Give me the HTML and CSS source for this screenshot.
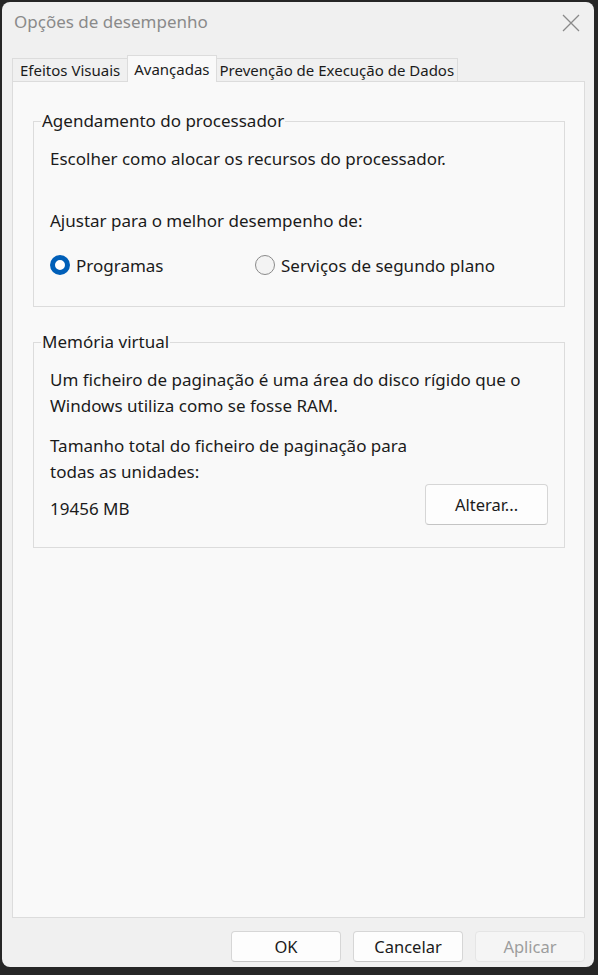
FILE: index.html
```html
<!DOCTYPE html>
<html lang="pt">
<head>
  <meta charset="UTF-8">
  <title>Opções de desempenho</title>
  <link rel="stylesheet" href="styles.css">
</head>
<body>
  <div class="window">
    <div class="titlebar">
      <span class="title">Opções de desempenho</span>
      <svg class="close" width="18" height="18" viewBox="0 0 18 18">
        <path d="M1 1L17 17M17 1L1 17" stroke="#8a8a8a" stroke-width="1.3" fill="none"/>
      </svg>
    </div>

    <div class="tabs">
      <div class="tab">Efeitos Visuais</div>
      <div class="tab active">Avançadas</div>
      <div class="tab long">Prevenção de Execução de Dados</div>
    </div>

    <div class="panel">
      <fieldset class="group">
        <legend>Agendamento do processador</legend>
        <div class="group-body cpu">
          <p class="line">Escolher como alocar os recursos do processador.</p>
          <p class="line spaced">Ajustar para o melhor desempenho de:</p>
          <div class="radios">
            <label class="radio checked"><span class="dot"></span>Programas</label>
            <label class="radio"><span class="dot"></span>Serviços de segundo plano</label>
          </div>
        </div>
      </fieldset>

      <fieldset class="group">
        <legend>Memória virtual</legend>
        <div class="group-body mem">
          <p class="line">Um ficheiro de paginação é uma área do disco rígido que o<br>Windows utiliza como se fosse RAM.</p>
          <p class="line gap">Tamanho total do ficheiro de paginação para<br>todas as unidades:</p>
          <div class="size-row">
            <span class="size">19456 MB</span>
            <button class="btn wide">Alterar...</button>
          </div>
        </div>
      </fieldset>
    </div>

    <div class="footer">
      <button class="btn">OK</button>
      <button class="btn">Cancelar</button>
      <button class="btn" disabled>Aplicar</button>
    </div>
  </div>
</body>
</html>
```

FILE: styles.css
```css
* {
  box-sizing: border-box;
}
body {
  margin: 0;
  background-color: #262626;
  font-family: "Segoe UI", "Noto Sans", "Open Sans", sans-serif;
  color: #1b1b1b;
}
.window {
  margin: 2px 4px 0 2px;
  height: 965px;
  background-color: #f0f0f0;
  border-radius: 8px;
  display: flex;
  flex-direction: column;
  padding: 0 9px 0 10px;
  overflow: hidden;
}
.titlebar {
  height: 52px;
  display: flex;
  align-items: flex-start;
  justify-content: space-between;
  padding: 8px 2px 0 2px;
}
.title {
  font-size: 17px;
  color: #8a8a8a;
  line-height: 24px;
}
.close {
  margin-top: 4px;
  margin-right: 3px;
}

/* tab strip */
.tabs {
  display: flex;
  align-items: flex-end;
  height: 27px;
  position: relative;
  z-index: 1;
}
.tab {
  font-size: 15px;
  line-height: 22px;
  padding: 0 7px;
  border: 1px solid #dcdcdc;
  border-bottom: none;
  background-color: #f0f0f0;
  margin-right: -1px;
}
.tab.active {
  background-color: #f9f9f9;
  line-height: 26px;
  margin-bottom: -1px;
  padding: 0 6px;
}
.tab.long {
  padding: 0 3px;
}

.panel {
  flex: 1;
  background-color: #f9f9f9;
  border: 1px solid #dcdcdc;
  padding: 28px 19px 0 20px;
}

/* group boxes */
.group {
  margin: 0 0 24px 0;
  padding: 0;
  border: 1px solid #dcdcdc;
  min-width: 0;
}
.group legend {
  font-size: 17px;
  line-height: 22px;
  margin-left: 7px;
  padding: 0 1px;
}
.group-body {
  padding: 14px 16px 0 16px;
}
.line {
  margin: 0;
  font-size: 17px;
  line-height: 26px;
}
.cpu {
  padding-bottom: 28px;
}
.cpu .spaced {
  margin-top: 36px;
}
.radios {
  display: flex;
  margin-top: 18px;
  height: 26px;
  align-items: center;
}
.radio {
  display: flex;
  align-items: center;
  font-size: 17px;
  white-space: nowrap;
}
.radio.checked {
  width: 205px;
}
.dot {
  width: 20px;
  height: 20px;
  border-radius: 50%;
  border: 1px solid #8a8a8a;
  background-color: #f3f3f3;
  margin-right: 6px;
}
.radio.checked .dot {
  border: 5px solid #005fb8;
  background-color: #ffffff;
}

.mem {
  padding-bottom: 22px;
}
.mem .gap {
  margin-top: 14px;
}
.size-row {
  display: flex;
  justify-content: space-between;
  align-items: flex-end;
  margin-top: -1px;
}
.size {
  font-size: 17px;
  line-height: 26px;
  margin-bottom: 3px;
}

/* buttons */
.btn {
  font-family: inherit;
  font-size: 16.5px;
  color: #1b1b1b;
  background-color: #fdfdfd;
  border: 1px solid #d6d6d6;
  border-bottom-color: #c4c4c4;
  border-radius: 4px;
  width: 110px;
  height: 31px;
  padding: 0;
}
.btn.wide {
  width: 123px;
  height: 41px;
}
.btn:disabled {
  background-color: #f5f5f5;
  border-color: #e5e5e5;
  color: #9d9d9d;
}
.footer {
  display: flex;
  justify-content: flex-end;
  gap: 12px;
  padding: 13px 0 5px 0;
  height: 49px;
}
```
